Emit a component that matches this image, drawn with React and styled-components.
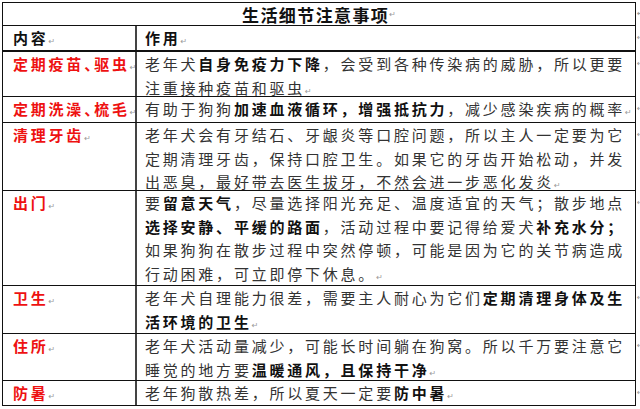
import React from 'react';
import styled, { createGlobalStyle } from 'styled-components';

const Global = createGlobalStyle`
  html, body { margin: 0; padding: 0; background: #fff; }
  body { font-family: "Noto Sans CJK SC", "Noto Sans", sans-serif; }
`;

const Page = styled.div`
  width: 640px;
  height: 409px;
  overflow: hidden;
  padding: 2px 0 0 2px;
  box-sizing: border-box;
`;

const Table = styled.div`
  width: 634px;
  box-sizing: border-box;
  border: 1px solid #111;
`;

const EndMark = styled.span`
  position: absolute;
  left: calc(100% + 2px);
  top: ${p => p.$top}px;
  font-family: "DejaVu Sans", sans-serif;
  font-size: 8px;
  color: #9a9a9a;
  line-height: 1;
`;

const TitleRow = styled.div`
  position: relative;
  height: 22px;
  display: flex;
  align-items: center;
  justify-content: center;
  border-bottom: 1px solid #111;
  font-size: 17px;
  font-weight: 700;
  letter-spacing: 1.4px;
  color: #111;
`;

const Row = styled.div`
  position: relative;
  display: grid;
  grid-template-columns: 134px 1fr;
  height: ${p => p.$h}px;
  border-bottom: ${p => (p.$last ? 0 : p.$thick ? 2 : 1)}px solid #111;
`;

const Cell = styled.div`
  font-size: 15px;
  letter-spacing: 2.78px;
  line-height: 23.5px;
  white-space: nowrap;
  overflow: hidden;
`;

const LabelCell = styled(Cell)`
  border-right: 2px solid #444;
  padding-left: 10px;
  color: ${p => (p.$head ? '#111' : '#ee1111')};
  font-weight: 700;
`;

const ContentCell = styled(Cell)`
  padding-left: 8px;
  color: ${p => (p.$head ? '#111' : '#333')};
  font-weight: ${p => (p.$head ? 700 : 400)};
`;

const Line = styled.div`
  display: block;
`;

const B = styled.b`
  font-weight: 700;
  color: #111;
`;

const Compact = styled.span`
  letter-spacing: -5px;
`;

const Mark = styled.span`
  font-family: "DejaVu Sans", sans-serif;
  font-size: 8px;
  font-weight: 400;
  color: #9a9a9a;
  letter-spacing: 0;
`;

const P = () => <Mark>↵</Mark>;

const rows = [
  {
    h: 44,
    label: <>定期疫苗<Compact>、</Compact>驱虫<P /></>,
    lines: [
      <>老年犬<B>自身免疫力下降</B>，会受到各种传染病的威胁，所以更要</>,
      <>注重接种疫苗和驱虫<P /></>,
    ],
  },
  {
    h: 25,
    label: <>定期洗澡<Compact>、</Compact>梳毛<P /></>,
    lines: [
      <>有助于狗狗<B>加速血液循环，增强抵抗力</B>，减少感染疾病的概率<P /></>,
    ],
  },
  {
    h: 67,
    label: <>清理牙齿<P /></>,
    lines: [
      <>老年犬会有牙结石、牙龈炎等口腔问题，所以主人一定要为它</>,
      <>定期清理牙齿，保持口腔卫生。如果它的牙齿开始松动，并发</>,
      <>出恶臭，最好带去医生拔牙，不然会进一步恶化发炎<P /></>,
    ],
  },
  {
    h: 94,
    label: <>出门<P /></>,
    lines: [
      <>要<B>留意天气</B>，尽量选择阳光充足、温度适宜的天气；散步地点</>,
      <><B>选择安静、平缓的路面</B>，活动过程中要记得给爱犬<B>补充水分；</B></>,
      <>如果狗狗在散步过程中突然停顿，可能是因为它的关节病造成</>,
      <>行动困难，可立即停下休息。<P /></>,
    ],
  },
  {
    h: 47,
    label: <>卫生<P /></>,
    lines: [
      <>老年犬自理能力很差，需要主人耐心为它们<B>定期清理身体及生</B></>,
      <><B>活环境的卫生</B><P /></>,
    ],
  },
  {
    h: 46,
    label: <>住所<P /></>,
    lines: [
      <>老年犬活动量减少，可能长时间躺在狗窝。所以千万要注意它</>,
      <>睡觉的地方要<B>温暖通风，且保持干净</B><P /></>,
    ],
  },
  {
    h: 24,
    label: <>防暑<P /></>,
    lines: [<>老年狗散热差，所以夏天一定要<B>防中暑</B><P /></>],
  },
];

export default function App() {
  return (
    <>
      <Global />
      <Page>
        <Table>
          <TitleRow>
            生活细节注意事项<Mark>↵</Mark>
            <EndMark $top={7}>↵</EndMark>
          </TitleRow>
          <Row $h={24} $thick>
            <LabelCell $head>内容<P /></LabelCell>
            <ContentCell $head>作用<P /></ContentCell>
            <EndMark $top={8}>↵</EndMark>
          </Row>
          {rows.map((r, i) => (
            <Row key={i} $h={r.h} $last={i === rows.length - 1}>
              <LabelCell>{r.label}</LabelCell>
              <ContentCell>
                {r.lines.map((l, j) => (
                  <Line key={j}>{l}</Line>
                ))}
              </ContentCell>
              <EndMark $top={8}>↵</EndMark>
            </Row>
          ))}
        </Table>
      </Page>
    </>
  );
}
